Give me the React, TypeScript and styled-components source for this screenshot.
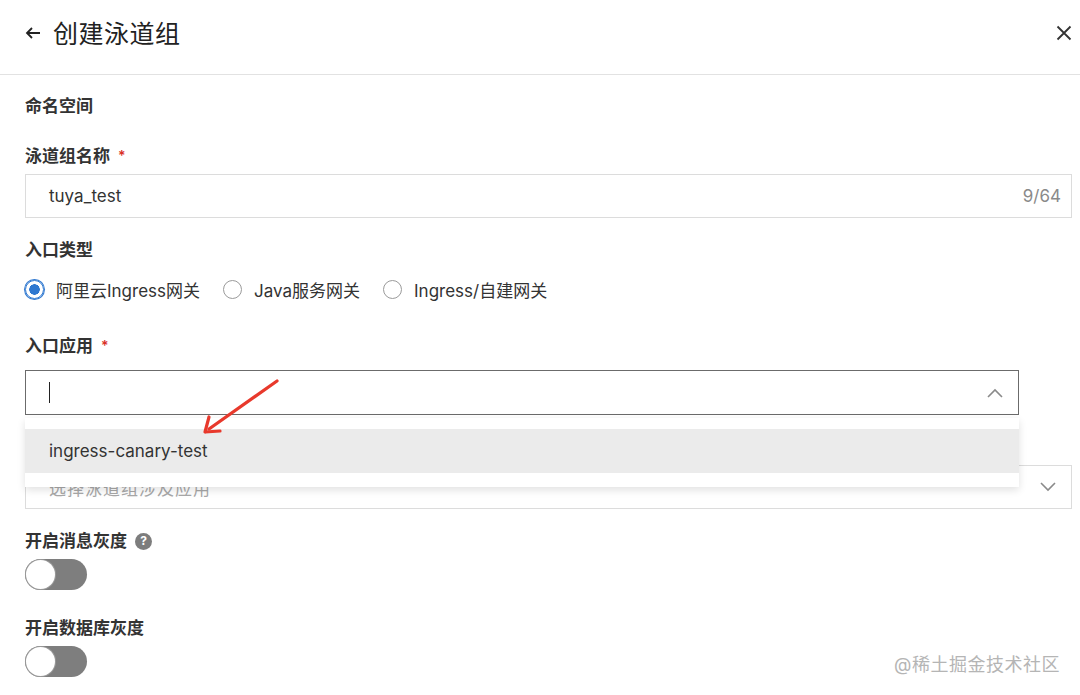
import React from "react";
import styled, { createGlobalStyle } from "styled-components";

const Global = createGlobalStyle`
  body {
    margin: 0;
    background: #ffffff;
    font-family: Inter, "Noto Sans CJK SC", sans-serif;
    color: #333333;
  }
`;

const Page = styled.div`
  position: relative;
  width: 1080px;
  height: 695px;
  overflow: hidden;
  background: #ffffff;
`;

const Header = styled.div`
  height: 75px;
  box-sizing: border-box;
  border-bottom: 1px solid #e2e2e2;
  display: flex;
  align-items: center;
  padding: 0 8px 11px 24px;
`;

const Title = styled.h1`
  flex: 1;
  margin: 0 0 0 11px;
  font-size: 25px;
  font-weight: 400;
  color: #222222;
  letter-spacing: 0.5px;
`;

const IconButton = styled.span<{ $shift?: number }>`
  display: flex;
  align-items: center;
  justify-content: center;
  margin-top: ${(p) => p.$shift ?? 0}px;
`;

const Body = styled.div`
  padding: 0 8px 0 25px;
  display: flex;
  flex-direction: column;
`;

const Label = styled.div<{ $top: number; $bottom?: number }>`
  margin-top: ${(p) => p.$top}px;
  margin-bottom: ${(p) => p.$bottom ?? 7}px;
  height: 22px;
  line-height: 22px;
  font-size: 17px;
  font-weight: 600;
  color: #333333;
  display: flex;
  align-items: center;
  gap: 6px;
`;

const Star = styled.span`
  color: #d93026;
  font-size: 14px;
  margin-left: 2px;
`;

const Help = styled.span`
  width: 17px;
  height: 17px;
  border-radius: 50%;
  background: #7d7d7d;
  color: #ffffff;
  font-size: 12px;
  font-weight: 700;
  display: inline-flex;
  align-items: center;
  justify-content: center;
  margin-left: 2px;
`;

const Input = styled.div<{ $width?: number; $focused?: boolean }>`
  box-sizing: border-box;
  width: ${(p) => (p.$width ? `${p.$width}px` : "100%")};
  height: ${(p) => (p.$focused ? 45 : 44)}px;
  border: 1px solid ${(p) => (p.$focused ? "#6b6b6b" : "#dcdcdc")};
  display: flex;
  align-items: center;
  padding: 0 14px 0 23px;
  font-size: 17px;
  color: #333333;
`;

const Value = styled.span<{ $muted?: boolean }>`
  flex: 1;
  display: flex;
  align-items: center;
  color: ${(p) => (p.$muted ? "#a8a8a8" : "#333333")};
  letter-spacing: ${(p) => (p.$muted ? "1px" : "0")};
`;

const Counter = styled.span`
  color: #8a8a8a;
  font-size: 17px;
  margin-right: -4px;
`;

const Caret = styled.span`
  display: block;
  width: 1px;
  height: 21px;
  background: #222222;
`;

const RadioRow = styled.div`
  display: flex;
  align-items: center;
  gap: 23px;
  height: 22px;
`;

const RadioItem = styled.label`
  display: flex;
  align-items: center;
  gap: 12px;
  font-size: 17px;
  color: #333333;
`;

const RadioDot = styled.span<{ $on?: boolean }>`
  box-sizing: border-box;
  width: 19px;
  height: 19px;
  border-radius: 50%;
  border: 1px solid ${(p) => (p.$on ? "#2f78d0" : "#9a9a9a")};
  background: ${(p) =>
    p.$on ? "radial-gradient(circle, #2f78d0 0 5px, #ffffff 5.5px)" : "#ffffff"};
  box-shadow: ${(p) => (p.$on ? "0 0 0 1px #2f78d0" : "none")};
`;

const Toggle = styled.span`
  position: relative;
  display: block;
  width: 62px;
  height: 31px;
  border-radius: 16px;
  background: #7e7e7e;
`;

const Knob = styled.span`
  position: absolute;
  left: 1px;
  top: 1px;
  width: 29px;
  height: 29px;
  border-radius: 50%;
  background: #ffffff;
  box-shadow: 0 0 0 1px #9a9a9a;
`;

const Dropdown = styled.div`
  position: absolute;
  left: 25px;
  top: 418px;
  width: 994px;
  height: 69px;
  box-sizing: border-box;
  padding-top: 11px;
  background: #ffffff;
  box-shadow: 0 3px 8px rgba(0, 0, 0, 0.12);
`;

const Option = styled.div<{ $active?: boolean }>`
  height: 44px;
  display: flex;
  align-items: center;
  padding-left: 24px;
  font-size: 17px;
  color: #333333;
  background: ${(p) => (p.$active ? "#ebebeb" : "#ffffff")};
`;

const Pointer = styled.svg`
  position: absolute;
  left: 195px;
  top: 372px;
`;

const Watermark = styled.div`
  position: absolute;
  right: 20px;
  bottom: 19px;
  font-size: 18px;
  color: #b5b5b5;
  letter-spacing: 0.5px;
`;

const Chevron = ({ up }: { up?: boolean }) => (
  <svg width="18" height="10" viewBox="0 0 18 10">
    <path
      d={up ? "M2 9 L9 2 L16 9" : "M2 1 L9 8 L16 1"}
      fill="none"
      stroke="#8a8a8a"
      strokeWidth="1.6"
    />
  </svg>
);

export default function App() {
  return (
    <Page>
      <Global />
      <Header>
        <IconButton $shift={2}>
          <svg width="18" height="14" viewBox="0 0 18 14">
            <path d="M16 7 H3 M8 2 L3 7 L8 12" fill="none" stroke="#222" strokeWidth="1.8" />
          </svg>
        </IconButton>
        <Title>创建泳道组</Title>
        <IconButton $shift={3}>
          <svg width="16" height="16" viewBox="0 0 16 16">
            <path d="M1.5 1.5 L14.5 14.5 M14.5 1.5 L1.5 14.5" stroke="#333" strokeWidth="1.8" />
          </svg>
        </IconButton>
      </Header>
      <Body>
        <Label $top={20} $bottom={0}>命名空间</Label>

        <Label $top={28}>
          泳道组名称<Star>*</Star>
        </Label>
        <Input>
          <Value>tuya_test</Value>
          <Counter>9/64</Counter>
        </Input>

        <Label $top={21} $bottom={17}>入口类型</Label>
        <RadioRow>
          <RadioItem>
            <RadioDot $on />
            阿里云Ingress网关
          </RadioItem>
          <RadioItem>
            <RadioDot />
            Java服务网关
          </RadioItem>
          <RadioItem>
            <RadioDot />
            Ingress/自建网关
          </RadioItem>
        </RadioRow>

        <Label $top={35} $bottom={13}>
          入口应用<Star>*</Star>
        </Label>
        <Input $width={994} $focused>
          <Value>
            <Caret />
          </Value>
          <Chevron up />
        </Input>

        <Label $top={21}>泳道组涉及应用</Label>
        <Input>
          <Value $muted>选择泳道组涉及应用</Value>
          <Chevron />
        </Input>

        <Label $top={21}>
          开启消息灰度<Help>?</Help>
        </Label>
        <Toggle>
          <Knob />
        </Toggle>

        <Label $top={27}>开启数据库灰度</Label>
        <Toggle>
          <Knob />
        </Toggle>
      </Body>

      <Dropdown>
        <Option $active>ingress-canary-test</Option>
      </Dropdown>

      <Pointer width="90" height="70" viewBox="0 0 90 70">
        <path d="M82 9 L14 57" stroke="#e8392c" strokeWidth="3.2" strokeLinecap="round" />
        <path d="M10 60 L14 45 M10 60 L25 59" stroke="#e8392c" strokeWidth="3.2" strokeLinecap="round" fill="none" />
      </Pointer>

      <Watermark>@稀土掘金技术社区</Watermark>
    </Page>
  );
}
